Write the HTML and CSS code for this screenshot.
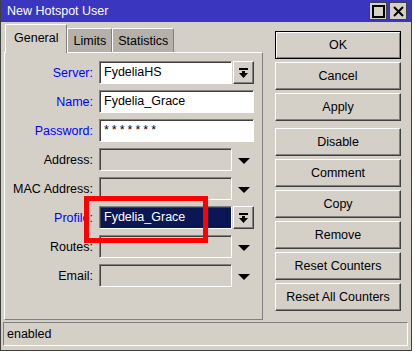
FILE: index.html
```html
<!DOCTYPE html>
<html>
<head>
  <title>New Hotspot User</title>
  <link rel="stylesheet" href="styles.css">
</head>
<body>
  <div class="window">
    <div class="titlebar">
      <span class="title">New Hotspot User</span>
      <div class="title-buttons">
        <span class="tbtn"><svg width="13" height="13" viewBox="0 0 13 13"><rect x="1" y="1" width="11" height="11" fill="none" stroke="#000" stroke-width="2"/></svg></span>
        <span class="tbtn"><svg width="13" height="13" viewBox="0 0 13 13"><path d="M2 2 L11 11 M11 2 L2 11" stroke="#000" stroke-width="2"/></svg></span>
      </div>
    </div>

    <div class="main">
      <div class="left">
        <div class="tabs">
          <div class="tab active">General</div>
          <div class="tab">Limits</div>
          <div class="tab">Statistics</div>
        </div>
        <div class="panel">
          <div class="row">
            <label class="lbl blue">Server:</label>
            <div class="field">FydeliaHS</div>
            <span class="combo-btn"><svg width="9" height="10" viewBox="0 0 9 10"><rect x="0" y="0" width="9" height="2"/><polygon points="3,3 6,3 6,5 9,5 4.5,10 0,5 3,5"/></svg></span>
          </div>
          <div class="row">
            <label class="lbl blue">Name:</label>
            <div class="field wide">Fydelia_Grace</div>
          </div>
          <div class="row">
            <label class="lbl blue">Password:</label>
            <div class="field wide pass">*******</div>
          </div>
          <div class="row">
            <label class="lbl">Address:</label>
            <div class="field off"></div>
            <span class="arrow"></span>
          </div>
          <div class="row">
            <label class="lbl">MAC Address:</label>
            <div class="field off"></div>
            <span class="arrow"></span>
          </div>
          <div class="row">
            <label class="lbl blue">Profile:</label>
            <div class="field selected">Fydelia_Grace</div>
            <span class="combo-btn"><svg width="9" height="10" viewBox="0 0 9 10"><rect x="0" y="0" width="9" height="2"/><polygon points="3,3 6,3 6,5 9,5 4.5,10 0,5 3,5"/></svg></span>
          </div>
          <div class="row">
            <label class="lbl">Routes:</label>
            <div class="field off"></div>
            <span class="arrow"></span>
          </div>
          <div class="row">
            <label class="lbl">Email:</label>
            <div class="field off"></div>
            <span class="arrow"></span>
          </div>
        </div>
      </div>

      <div class="buttons">
        <button class="btn default">OK</button>
        <button class="btn">Cancel</button>
        <button class="btn spaced">Apply</button>
        <button class="btn">Disable</button>
        <button class="btn">Comment</button>
        <button class="btn">Copy</button>
        <button class="btn">Remove</button>
        <button class="btn">Reset Counters</button>
        <button class="btn">Reset All Counters</button>
      </div>
    </div>

    <div class="status">enabled</div>

    <div class="highlight"></div>
  </div>
</body>
</html>
```

FILE: styles.css
```css
body {
  margin: 0;
  background-color: #ffffff;
  font-family: "Liberation Sans", Arial, sans-serif;
  font-size: 12.5px;
  color: #000;
}
.window {
  position: relative;
  width: 412px;
  height: 351px;
  box-sizing: border-box;
  background-color: #d4d0c8;
  border-left: 1px solid #404040;
  border-right: 1px solid #404040;
  border-bottom: 1px solid #404040;
  display: flex;
  flex-direction: column;
}
.titlebar {
  height: 22px;
  background-color: #3b36c0;
  color: #ffffff;
  display: flex;
  align-items: center;
  justify-content: space-between;
  padding: 0 4px 0 6px;
}
.title {
  font-size: 12.5px;
}
.title-buttons {
  display: flex;
  gap: 2px;
}
.tbtn {
  width: 16px;
  height: 16px;
  background-color: #d4d0c8;
  border: 1px solid #404040;
  display: flex;
  align-items: center;
  justify-content: center;
}
.main {
  flex: 1;
  display: flex;
  padding: 2px 0 0 3px;
}
.left {
  width: 259px;
}
.tabs {
  display: flex;
  align-items: flex-end;
  height: 28px;
  padding-left: 1px;
}
.tab {
  height: 24px;
  box-sizing: border-box;
  padding: 0 5px;
  display: flex;
  align-items: center;
  background-color: #b5b1aa;
  border-top: 1px solid #ffffff;
  border-left: 1px solid #ffffff;
  border-right: 1px solid #808080;
}
.tab.active {
  height: 29px;
  margin-bottom: -1px;
  position: relative;
  z-index: 1;
  padding: 0 8px 2px 8px;
  background-color: #d4d0c8;
  border-right: 1px solid #808080;
}
.panel {
  height: 268px;
  box-sizing: border-box;
  border: 1px solid;
  border-color: #ffffff #808080 #808080 #ffffff;
  padding-top: 8px;
  display: flex;
  flex-direction: column;
  gap: 6px;
}
.row {
  display: flex;
  align-items: center;
  height: 23px;
}
.lbl {
  width: 88px;
  text-align: right;
  margin-right: 6px;
}
.blue {
  color: #0000ff;
}
.field {
  width: 133px;
  height: 23px;
  box-sizing: border-box;
  background-color: #ffffff;
  border: 1px solid;
  border-color: #808080 #ffffff #ffffff #808080;
  box-shadow: inset 1px 1px 0 #404040;
  padding-left: 4px;
  line-height: 21px;
  white-space: nowrap;
}
.field.wide {
  width: 155px;
}
.field.pass {
  letter-spacing: 3px;
}
.field.off {
  background-color: #d4d0c8;
}
.field.selected {
  background-color: #0b1655;
  color: #ffffff;
}
.combo-btn {
  width: 21px;
  height: 23px;
  box-sizing: border-box;
  margin-left: 1px;
  border: 1px solid;
  border-color: #ffffff #404040 #404040 #ffffff;
  box-shadow: inset -1px -1px 0 #808080;
  display: flex;
  align-items: center;
  justify-content: center;
}
.arrow {
  width: 0;
  height: 0;
  margin-left: 6px;
  margin-top: 3px;
  border-left: 6px solid transparent;
  border-right: 6px solid transparent;
  border-top: 6px solid #000;
}
.buttons {
  margin-left: 12px;
  margin-top: 7px;
  display: flex;
  flex-direction: column;
  gap: 3px;
}
.btn {
  width: 126px;
  height: 28px;
  box-sizing: border-box;
  background-color: #d4d0c8;
  font-family: "Liberation Sans", Arial, sans-serif;
  font-size: 12.5px;
  color: #000;
  border: 1px solid;
  border-color: #ffffff #404040 #404040 #ffffff;
  box-shadow: inset -1px -1px 0 #808080;
  padding: 0;
}
.btn.default {
  border: 1px solid #000;
  box-shadow: inset 1px 1px 0 #ffffff, inset -1px -1px 0 #808080;
}
.btn.spaced {
  margin-bottom: 4px;
}
.status {
  height: 24px;
  box-sizing: border-box;
  margin: 0 3px 4px 2px;
  border: 1px solid;
  border-color: #808080 #ffffff #ffffff #808080;
  padding-left: 3px;
  display: flex;
  align-items: center;
}
.highlight {
  position: absolute;
  left: 83px;
  top: 196px;
  width: 124px;
  height: 47px;
  box-sizing: border-box;
  border: 5px solid #ff0000;
}
```
